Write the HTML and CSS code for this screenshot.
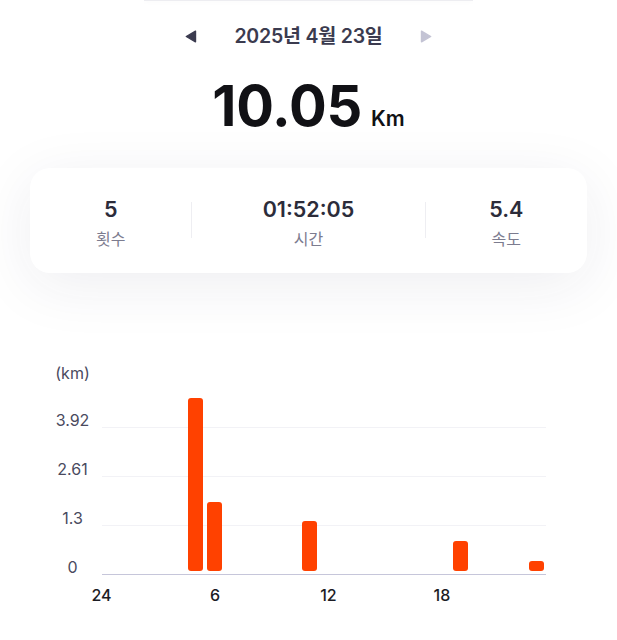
FILE: index.html
```html
<!DOCTYPE html>
<html lang="ko">
<head>
  <meta charset="UTF-8">
  <title>일일 기록</title>
  <link rel="stylesheet" href="styles.css">
</head>
<body>

  <div class="top-sheet"></div>

  <div class="date-nav">
    <button class="arrow-btn" aria-label="이전 날짜">
      <svg width="12" height="13" viewBox="0 0 12 13"><path d="M10.5 1.2 L10.5 11.8 L1.3 6.5 Z" fill="#3b3b4f" stroke="#3b3b4f" stroke-width="1.4" stroke-linejoin="round"/></svg>
    </button>
    <h1 class="date">2025년 4월 23일</h1>
    <button class="arrow-btn" aria-label="다음 날짜">
      <svg width="12" height="13" viewBox="0 0 12 13"><path d="M1.5 1.2 L1.5 11.8 L10.7 6.5 Z" fill="#c3c3d4" stroke="#c3c3d4" stroke-width="1.4" stroke-linejoin="round"/></svg>
    </button>
  </div>

  <div class="total">
    <span class="total-value">10.05</span>
    <span class="total-unit">Km</span>
  </div>

  <div class="stats-card">
    <div class="stat">
      <div class="stat-value">5</div>
      <div class="stat-label">횟수</div>
    </div>
    <div class="divider"></div>
    <div class="stat">
      <div class="stat-value">01:52:05</div>
      <div class="stat-label">시간</div>
    </div>
    <div class="divider"></div>
    <div class="stat">
      <div class="stat-value">5.4</div>
      <div class="stat-label">속도</div>
    </div>
  </div>

  <div class="chart">
    <div class="unit">(km)</div>

    <div class="y-label r1">3.92</div>
    <div class="grid-line r1"></div>
    <div class="y-label r2">2.61</div>
    <div class="grid-line r2"></div>
    <div class="y-label r3">1.3</div>
    <div class="grid-line r3"></div>
    <div class="y-label r4">0</div>
    <div class="grid-line r4 base"></div>

    <!-- one slot per hour, 0 ~ 23 -->
    <div class="bars">
      <div class="slot"></div>
      <div class="slot"></div>
      <div class="slot"></div>
      <div class="slot"></div>
      <div class="slot"></div>
      <div class="slot"><div class="bar" style="height:173px"></div></div>
      <div class="slot"><div class="bar" style="height:69px"></div></div>
      <div class="slot"></div>
      <div class="slot"></div>
      <div class="slot"></div>
      <div class="slot"></div>
      <div class="slot"><div class="bar" style="height:50px"></div></div>
      <div class="slot"></div>
      <div class="slot"></div>
      <div class="slot"></div>
      <div class="slot"></div>
      <div class="slot"></div>
      <div class="slot"></div>
      <div class="slot"></div>
      <div class="slot"><div class="bar" style="height:30px"></div></div>
      <div class="slot"></div>
      <div class="slot"></div>
      <div class="slot"></div>
      <div class="slot"><div class="bar" style="height:10px"></div></div>
    </div>

    <div class="x-labels">
      <div class="tick"><span>24</span></div>
      <div class="tick"><span>6</span></div>
      <div class="tick"><span>12</span></div>
      <div class="tick"><span>18</span></div>
    </div>
  </div>

</body>
</html>
```

FILE: styles.css
```css
* {
  box-sizing: border-box;
}

body {
  margin: 0;
  background: #ffffff;
  font-family: Inter, "Noto Sans CJK KR", sans-serif;
  color: #2c2c3a;
  overflow: hidden;
}

.top-sheet {
  width: 329px;
  height: 1px;
  margin: 0 auto;
  background: #ededf1;
  box-shadow: 0 1px 4px rgba(40, 40, 70, 0.05);
}

/* date navigation */
.date-nav {
  display: flex;
  justify-content: center;
  align-items: center;
  gap: 37px;
  margin-top: 23px;
  height: 24px;
}

.arrow-btn {
  display: flex;
  padding: 0;
  border: none;
  background: none;
  cursor: pointer;
}

.date {
  margin: 0;
  font-size: 19.5px;
  line-height: 24px;
  font-weight: 600;
  color: #3b3b4f;
  letter-spacing: -0.2px;
}

/* total distance */
.total {
  display: flex;
  justify-content: center;
  align-items: baseline;
  gap: 9px;
  margin-top: 30px;
  height: 56px;
  line-height: 56px;
}

.total-value {
  font-size: 56px;
  font-weight: 700;
  color: #111115;
  letter-spacing: -0.2px;
}

.total-unit {
  font-size: 21px;
  font-weight: 600;
  color: #111115;
}

/* summary card */
.stats-card {
  display: grid;
  grid-template-columns: 1fr 1px 1.44fr 1px 1fr;
  align-items: center;
  margin: 34px 30px 0;
  padding: 27px 0 24px;
  background: #ffffff;
  border-radius: 20px;
  box-shadow: 0 12px 60px rgba(40, 40, 80, 0.08);
}

.stat {
  display: flex;
  flex-direction: column;
  align-items: center;
  gap: 6px;
}

.stat-value {
  font-size: 21.5px;
  line-height: 28px;
  font-weight: 600;
  color: #2c2c3a;
}

.stat-label {
  font-size: 16px;
  line-height: 20px;
  color: #7c7c8f;
}

.divider {
  height: 36px;
  margin-top: -4px;
  background: #eeeef2;
}

/* hourly chart */
.chart {
  display: grid;
  grid-template-columns: 39px 454px;
  grid-template-rows: 18px 45.7px 49.2px 49.2px 49.2px auto;
  margin: 91px 0 0 53px;
}

.unit,
.y-label {
  font-size: 16px;
  line-height: 14px;
  color: #4a4a5e;
  text-align: center;
}

.unit {
  grid-row: 1;
  grid-column: 1;
  line-height: 18px;
}

.y-label {
  grid-column: 1;
  align-self: end;
  margin-bottom: 1px;
}

.grid-line {
  grid-column: 2;
  margin-left: 9.5px;
  border-bottom: 1px solid #f2f2f6;
}

.grid-line.base {
  border-bottom-color: #c6c6da;
}

.r1 { grid-row: 2; }
.r2 { grid-row: 3; }
.r3 { grid-row: 4; }
.r4 { grid-row: 5; }

.bars {
  grid-column: 2;
  grid-row: 2 / 6;
  display: flex;
  align-items: flex-end;
  padding-bottom: 4.6px;
}

.slot {
  flex: 0 0 18.917px;
  display: flex;
  justify-content: center;
}

.bar {
  width: 15px;
  background: #ff4100;
  border-radius: 3px;
}

.x-labels {
  grid-column: 2;
  grid-row: 6;
  display: flex;
  margin-top: 11px;
}

.tick {
  flex: 0 0 113.5px;
}

.tick span {
  display: flex;
  justify-content: center;
  width: 18.917px;
  font-size: 16px;
  line-height: 18px;
  font-weight: 500;
  color: #1c1c24;
  white-space: nowrap;
}
```
